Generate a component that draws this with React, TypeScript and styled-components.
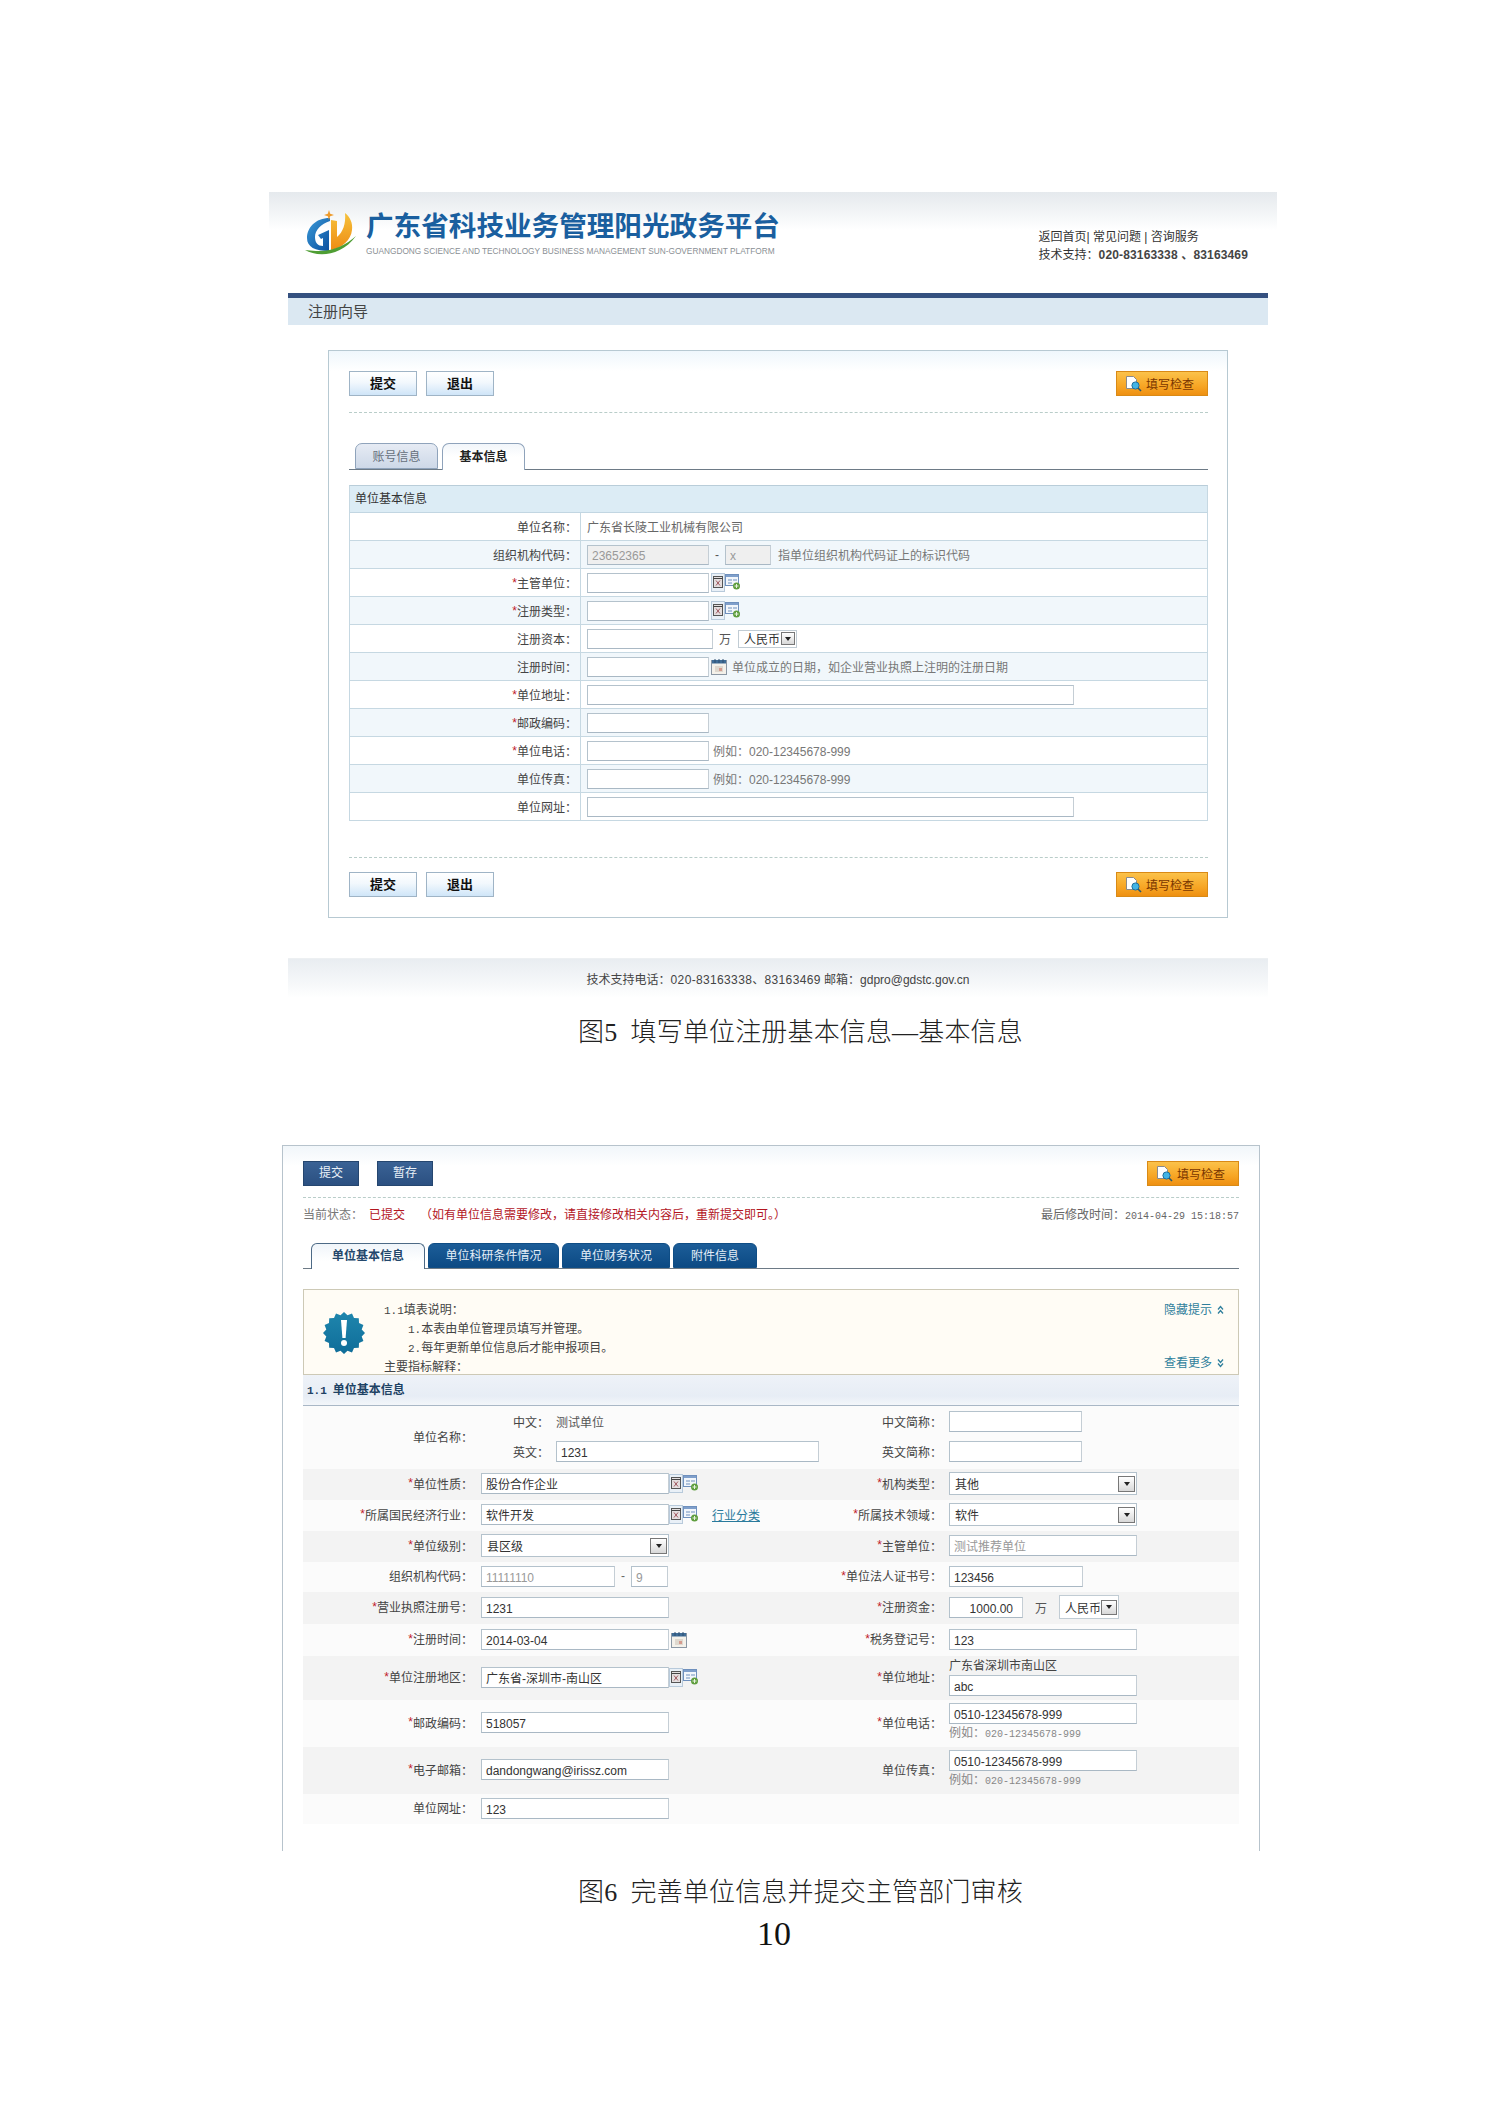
import React from 'react';
import styled, { createGlobalStyle } from 'styled-components';

const GlobalStyle = createGlobalStyle`
  html, body { margin: 0; padding: 0; background: #fff; }
  body {
    font-family: "Liberation Sans", "Noto Sans CJK SC", sans-serif;
    font-size: 12px;
    color: #333;
  }
`;

const Page = styled.div`
  width: 1489px;
  height: 2105px;
  overflow: hidden;
  padding-top: 192px;
  box-sizing: border-box;
`;

/* ---- figure 5 ---- */

const Figure5 = styled.section`
  width: 1008px;
  margin-left: 269px;
`;

const Header = styled.header`
  height: 101px;
  display: flex;
  justify-content: space-between;
  background: linear-gradient(#e5e9ed 0, #f6f8f9 26px, #fff 38px);
`;

const Brand = styled.div`
  display: flex;
  padding: 18px 0 0 36px;
`;

const BrandText = styled.div`
  margin-left: 9px;
`;

const BrandTitle = styled.div`
  font-size: 27.6px;
  line-height: 28px;
  font-weight: 700;
  color: #1a5f9f;
  white-space: nowrap;
  margin-top: 3px;
`;

const BrandSub = styled.div`
  font-size: 8.3px;
  line-height: 10px;
  margin-top: 5px;
  color: #8a8f94;
  white-space: nowrap;
`;

const HeaderLinks = styled.div`
  margin: 36px 29px 0 0;
  line-height: 18px;
  color: #333;
  white-space: nowrap;
`;

const Phone = styled.span`
  font-weight: 700;
  letter-spacing: 0.15px;
  color: #444;
`;

const NavBar = styled.div`
  margin: 0 9px 0 19px;
  height: 27px;
  line-height: 27px;
  padding-left: 20px;
  border-top: 5px solid #34507f;
  background: #dbe8f2;
  font-size: 15px;
  color: #444;
`;

const Panel = styled.div`
  box-sizing: border-box;
  width: 900px;
  height: 568px;
  margin: 25px 0 0 59px;
  padding: 20px 19px 0 20px;
  border: 1px solid #b7c9d2;
  background: linear-gradient(#eff7fc 0, #fff 20px);
`;

const Toolbar = styled.div<{ $gap: number }>`
  display: flex;
  gap: ${(p) => p.$gap}px;
  height: 25px;
`;

const Spacer = styled.div`
  flex: 1;
`;

const LightButton = styled.div`
  box-sizing: border-box;
  width: 68px;
  height: 25px;
  line-height: 24px;
  text-align: center;
  font-weight: 700;
  font-size: 13px;
  color: #111;
  border: 1px solid #9fb4c6;
  background: linear-gradient(#fff, #f2f8fd 45%, #cfe5f8);
`;

const CheckButton = styled.div`
  box-sizing: border-box;
  width: 92px;
  height: 25px;
  display: flex;
  align-items: center;
  padding-left: 8px;
  gap: 4px;
  font-size: 12px;
  color: #7a3600;
  border: 1px solid #d98a16;
  background: linear-gradient(#fbc24a, #f7a625 60%, #ee9012);
`;

const Dashed = styled.div<{ $top: number; $bottom: number }>`
  border-top: 1px dashed #b9cdc9;
  margin: ${(p) => p.$top}px 0 ${(p) => p.$bottom}px;
`;

const TabRow = styled.div<{ $indent: number; $gap: number; $h: number; $top?: number }>`
  display: flex;
  height: ${(p) => p.$h}px;
  margin-top: ${(p) => p.$top ?? 0}px;
  padding-left: ${(p) => p.$indent}px;
  gap: ${(p) => p.$gap}px;
  border-bottom: 1px solid #6d7a86;
`;

const LightTab = styled.div<{ $active?: boolean }>`
  box-sizing: border-box;
  width: 83px;
  height: ${(p) => (p.$active ? 27 : 26)}px;
  line-height: 26px;
  text-align: center;
  border: 1px solid #8fa3bb;
  border-bottom: ${(p) => (p.$active ? 'none' : '1px solid #8fa3bb')};
  border-radius: 7px 7px 0 0;
  font-weight: ${(p) => (p.$active ? 700 : 400)};
  color: ${(p) => (p.$active ? '#222' : '#66707c')};
  background: ${(p) => (p.$active ? 'linear-gradient(#f2f6fa, #fff 50%)' : 'linear-gradient(#e6ebf4, #cdd8e8)')};
`;

const InfoTable = styled.div`
  margin-top: 15px;
  border: 1px solid #c6d8e2;
  border-top-color: #b9cdd9;
`;

const TableTitle = styled.div`
  height: 26px;
  line-height: 26px;
  padding-left: 5px;
  background: #dcecf5;
  border-bottom: 1px solid #c2d6e2;
  color: #333;
`;

const InfoRow = styled.div<{ $alt?: boolean }>`
  display: grid;
  grid-template-columns: 231px 1fr;
  height: 27px;
  border-bottom: 1px solid #c6d8e2;
  background: ${(p) => (p.$alt ? '#f1f7fb' : '#fff')};
  &:last-child { border-bottom: none; }
`;

const InfoLabel = styled.div`
  display: flex;
  align-items: center;
  justify-content: flex-end;
  padding-right: 3px;
  border-right: 1px solid #c6d8e2;
  color: #444;
`;

const InfoField = styled.div`
  display: flex;
  align-items: center;
  padding-left: 6px;
  color: #666;
`;

const Star = styled.span`
  color: #c0202a;
`;

const TextBox = styled.div<{ $w: number; $h?: number; $gray?: boolean; $muted?: boolean; $right?: boolean }>`
  box-sizing: border-box;
  width: ${(p) => p.$w}px;
  height: ${(p) => p.$h ?? 20}px;
  line-height: ${(p) => (p.$h ?? 20) + 1}px;
  flex: none;
  padding: 0 ${(p) => (p.$right ? 9 : 4)}px 0 4px;
  text-align: ${(p) => (p.$right ? 'right' : 'left')};
  border: 1px solid #b4c2cc;
  border-right-color: #c5ced5;
  border-bottom-color: #a9b8c4;
  background: ${(p) => (p.$gray ? '#efefef' : '#fff')};
  color: ${(p) => (p.$gray || p.$muted ? '#999' : '#333')};
  white-space: nowrap;
`;

const Hint = styled.span<{ $left: number }>`
  margin-left: ${(p) => p.$left}px;
  color: #777;
  white-space: nowrap;
`;

const Plain = styled.span<{ $left: number; $right: number }>`
  margin: 0 ${(p) => p.$right}px 0 ${(p) => p.$left}px;
  color: #555;
`;

const MiniSelect = styled.div<{ $w: number; $h: number }>`
  box-sizing: border-box;
  width: ${(p) => p.$w}px;
  height: ${(p) => p.$h}px;
  flex: none;
  display: flex;
  align-items: center;
  justify-content: space-between;
  padding: 0 1px 0 5px;
  background: #fff;
  border: 1px solid #c1ccd4;
  color: #333;
`;

const Footer = styled.footer`
  margin: 40px 9px 0 19px;
  height: 40px;
  padding-top: 13px;
  box-sizing: border-box;
  line-height: 16px;
  text-align: center;
  color: #444;
  background: linear-gradient(#e9edf1, #f5f7f9 60%, #fff);
  border-top: 1px solid #edf0f2;
`;

const FooterPhone = styled.span`
  letter-spacing: 0.35px;
`;

const Caption = styled.div<{ $top: number; $left: number }>`
  margin: ${(p) => p.$top}px 0 0 ${(p) => p.$left}px;
  height: 36px;
  line-height: 36px;
  font-family: "Liberation Serif", "Noto Sans CJK SC", serif;
  font-size: 26px;
  font-weight: 300;
  letter-spacing: 0.15px;
  color: #222;
  white-space: nowrap;
`;

/* ---- figure 6 ---- */

const Panel6 = styled.section`
  box-sizing: border-box;
  width: 978px;
  height: 706px;
  margin: 94px 0 0 282px;
  padding: 15px 20px 0 20px;
  border: 1px solid #b7c3cc;
  border-bottom: none;
  background: linear-gradient(#f1f6fa 0, #fff 20px);
`;

const DarkButton = styled.div`
  width: 56px;
  height: 25px;
  line-height: 24px;
  text-align: center;
  color: #eaf1f8;
  background: linear-gradient(#3b6396, #2a4f80);
  box-shadow: inset 0 0 0 1px #25466f;
`;

const StatusRow = styled.div`
  display: flex;
  align-items: center;
  height: 30px;
  color: #777;
  white-space: nowrap;
`;

const Red = styled.span<{ $left: number }>`
  margin-left: ${(p) => p.$left}px;
  color: #b3161f;
`;

const Modified = styled.span`
  margin-left: auto;
  color: #666;
`;

const Mono = styled.span<{ $size?: number }>`
  font-family: "Liberation Mono", monospace;
  font-size: ${(p) => p.$size ?? 10}px;
`;

const DarkTab = styled.div<{ $w: number; $active?: boolean }>`
  box-sizing: border-box;
  width: ${(p) => p.$w}px;
  height: ${(p) => (p.$active ? 26 : 25)}px;
  line-height: 24px;
  text-align: center;
  border-radius: 6px 6px 0 0;
  border: 1px solid ${(p) => (p.$active ? '#4d6a86' : '#0f4d85')};
  border-bottom: ${(p) => (p.$active ? 'none' : '1px solid #0f4d85')};
  font-weight: ${(p) => (p.$active ? 700 : 400)};
  color: ${(p) => (p.$active ? '#24486c' : '#e4eef7')};
  background: ${(p) => (p.$active ? 'linear-gradient(#f0f5fa, #fff 70%)' : 'linear-gradient(#1c5d98, #0c4a84)')};
`;

const Notice = styled.div`
  box-sizing: border-box;
  height: 86px;
  margin-top: 20px;
  display: flex;
  border: 1px solid #cdc9b6;
  background: #fffcf5;
`;

const NoticeIcon = styled.div`
  width: 80px;
  display: flex;
  align-items: center;
  justify-content: center;
  padding-top: 1px;
`;

const NoticeText = styled.div`
  padding-top: 11px;
  line-height: 18px;
  color: #444;
`;

const NoticeLine = styled.div<{ $indent?: boolean }>`
  padding-left: ${(p) => (p.$indent ? 24 : 0)}px;
`;

const NoticeLinks = styled.div`
  margin-left: auto;
  padding: 11px 14px 2px 0;
  display: flex;
  flex-direction: column;
  justify-content: space-between;
`;

const NoticeLink = styled.div`
  display: flex;
  align-items: center;
  gap: 5px;
  line-height: 18px;
  color: #2f7f9c;
`;

const SectionHead = styled.div`
  height: 30px;
  line-height: 30px;
  padding-left: 4px;
  font-weight: 700;
  color: #1e4264;
  background: linear-gradient(#eef2f8, #e7edf5 70%, #f3f6fa);
  border-bottom: 1px solid #a9b7c6;
`;

const SectionNo = styled.span`
  font-family: "Liberation Mono", monospace;
  font-size: 11px;
  margin-right: 6px;
`;

const FormRow = styled.div<{ $h: number; $gray?: boolean }>`
  display: grid;
  grid-template-columns: 170px 298px 171px 294px;
  height: ${(p) => p.$h}px;
  background: ${(p) => (p.$gray ? '#f3f3f3' : '#fbfbfb')};
`;

const FormLabel = styled.div`
  display: flex;
  align-items: center;
  justify-content: flex-end;
  padding-bottom: 3px;
  box-sizing: border-box;
  color: #444;
  white-space: nowrap;
`;

const FormCell = styled.div<{ $pad: number }>`
  display: flex;
  align-items: center;
  padding-left: ${(p) => p.$pad}px;
  padding-bottom: 2px;
  box-sizing: border-box;
  color: #333;
`;

const StackCell = styled.div<{ $pad: number; $gap?: number }>`
  display: flex;
  flex-direction: column;
  justify-content: center;
  gap: ${(p) => p.$gap ?? 0}px;
  padding-left: ${(p) => p.$pad}px;
  padding-bottom: 2px;
  box-sizing: border-box;
`;

const NameLines = styled.div`
  display: grid;
  grid-template-columns: 76px 1fr;
  grid-auto-rows: 30px;
  align-items: center;
  color: #444;
`;

const ShortKeys = styled.div`
  display: grid;
  grid-auto-rows: 30px;
  align-items: center;
  justify-items: end;
  color: #444;
`;

const NameKey = styled.div`
  text-align: right;
`;

const NameValue = styled.div`
  padding-left: 7px;
  color: #555;
`;

const AddressText = styled.div`
  line-height: 17px;
  color: #444;
`;

const SubHint = styled.div`
  margin-top: 2px;
  line-height: 14px;
  color: #888;
`;

const SelectBox = styled.div<{ $w: number }>`
  box-sizing: border-box;
  width: ${(p) => p.$w}px;
  height: 23px;
  display: flex;
  align-items: center;
  justify-content: space-between;
  padding: 0 1px 0 5px;
  flex: none;
  background: #fff;
  border: 1px solid #b4c2cc;
  color: #333;
`;

const DropButton = styled.div<{ $size: number }>`
  box-sizing: border-box;
  width: ${(p) => p.$size}px;
  height: ${(p) => p.$size - 1}px;
  display: flex;
  align-items: center;
  justify-content: center;
  border: 1px solid #777;
  background: linear-gradient(#fff, #d8d8d8);
`;

const TriDown = styled.div`
  width: 0;
  height: 0;
  border: 3px solid transparent;
  border-top: 4px solid #222;
  border-bottom: none;
`;

const IconGroup = styled.div<{ $left?: number }>`
  display: flex;
  align-items: center;
  margin-left: ${(p) => p.$left ?? 2}px;
`;

const LinkText = styled.a`
  margin-left: 13px;
  color: #2a7a9c;
  text-decoration: underline;
`;

const CodeDash = styled.span`
  margin: 0 6px;
  color: #666;
`;

const PageNo = styled.div`
  margin: 3px 0 0 757px;
  height: 40px;
  line-height: 40px;
  font-family: "Liberation Serif", serif;
  font-size: 34px;
  color: #111;
`;

/* ---- drawings ---- */

const Logo = () => (
  <svg width="52" height="46" viewBox="0 0 52 46">
    <defs>
      <linearGradient id="logoBlue" x1="0" y1="0" x2="1" y2="1">
        <stop offset="0" stopColor="#3a9ad8" />
        <stop offset="1" stopColor="#0b4f9e" />
      </linearGradient>
      <linearGradient id="logoOrange" x1="0" y1="0" x2="0" y2="1">
        <stop offset="0" stopColor="#f6c23c" />
        <stop offset="1" stopColor="#ee8c14" />
      </linearGradient>
    </defs>
    <path d="M25 8C10 8 2 18 2 28c0 9 8 13 22 13V20l-11 5 3 4 2-1v8c-5 0-8-3-8-9 0-7 6-13 15-16z" fill="url(#logoBlue)" />
    <path d="M26 10l6 1v16c6-5 9-13 8-24 5 4 8 10 7 17-1 10-10 18-21 20z" fill="url(#logoOrange)" />
    <path d="M0 40c12 7 36 7 51-14-10 9-24 16-40 15-4 0-8-1-11-1z" fill="#4f9e34" />
    <path d="M24 0l1.2 3.8L29 5l-3.8 1.2L24 10l-1.2-3.8L19 5l3.8-1.2z" fill="#ee9a2a" />
  </svg>
);

const PickIcon = () => (
  <svg width="14" height="19" viewBox="0 0 14 19">
    <rect x="0.5" y="0.5" width="13" height="18" fill="#e9f0f7" stroke="#b8cadb" />
    <rect x="2.5" y="3.5" width="9" height="11" fill="#e4dfe0" stroke="#555" />
    <path d="M2.5 5.5h9" stroke="#444" />
    <path d="M5 7.5l4 5M9 7.5l-4 5" stroke="#a0575f" />
  </svg>
);

const AddIcon = () => (
  <svg width="16" height="17" viewBox="0 0 16 17">
    <rect x="0.5" y="0.5" width="13" height="11" fill="#f2f6fb" stroke="#6f90bd" />
    <path d="M1 1h12v2H1z" fill="#7f9fcb" />
    <path d="M3 6h4M3 9h4M8 6h4" stroke="#6f90bd" />
    <circle cx="11.5" cy="12" r="3.5" fill="#5f9e3f" />
    <path d="M9.5 12h4M11.5 10v4" stroke="#e8f3e0" />
  </svg>
);

const CalendarIcon = () => (
  <svg width="16" height="17" viewBox="0 0 16 17">
    <rect x="0.5" y="2.5" width="15" height="14" fill="#f4f1ea" stroke="#8b97a4" />
    <rect x="1" y="2" width="14" height="3.5" fill="#3f6c96" />
    <path d="M4 1v4M8 1v4M12 1v4" stroke="#2f4f70" />
    <path d="M4 9h8M4 11h8M4 13h8" stroke="#c9bfb3" />
    <rect x="8" y="10" width="3" height="3" fill="#d59b8e" />
  </svg>
);

const CheckIcon = () => (
  <svg width="17" height="17" viewBox="0 0 17 17">
    <path d="M1.5 1.5h7l3 3v9h-10z" fill="#fff" stroke="#8a8a8a" />
    <circle cx="10.5" cy="10.5" r="3.6" fill="#42b4e6" stroke="#1f6f9c" />
    <path d="M13 13l3 3" stroke="#27586f" strokeWidth="1.6" />
  </svg>
);

const burstPoints = Array.from({ length: 32 }, (_, i) => {
  const r = i % 2 === 0 ? 21 : 18;
  const a = (i * Math.PI) / 16;
  return `${(21 + r * Math.sin(a)).toFixed(1)},${(21 - r * Math.cos(a)).toFixed(1)}`;
}).join(' ');

const AlertBurst = () => (
  <svg width="42" height="42" viewBox="0 0 42 42">
    <defs>
      <linearGradient id="burstFill" x1="0" y1="0" x2="0" y2="1">
        <stop offset="0" stopColor="#1f86ad" />
        <stop offset="1" stopColor="#0f6d99" />
      </linearGradient>
    </defs>
    <polygon points={burstPoints} fill="url(#burstFill)" />
    <path d="M18 8h6l-1.4 18h-3.2z" fill="#fff" />
    <circle cx="21" cy="31" r="3" fill="#fff" />
  </svg>
);

const Chevrons = ({ up }: { up?: boolean }) => (
  <svg width="7" height="10" viewBox="0 0 7 10">
    <path
      d={up ? 'M1 4.5l2.5-3 2.5 3M1 8.5l2.5-3 2.5 3' : 'M1 1.5l2.5 3 2.5-3M1 5.5l2.5 3 2.5-3'}
      fill="none"
      stroke="#2f7f9c"
      strokeWidth="1.3"
    />
  </svg>
);

const PickAdd = ({ left }: { left?: number }) => (
  <IconGroup $left={left}>
    <PickIcon />
    <AddIcon />
  </IconGroup>
);

const Label = ({ text, req }: { text: string; req?: boolean }) => (
  <>
    {req && <Star>*</Star>}
    {text}：
  </>
);

const CheckAction = () => (
  <CheckButton>
    <CheckIcon />
    填写检查
  </CheckButton>
);

const Figure5Actions = () => (
  <Toolbar $gap={9}>
    <LightButton>提交</LightButton>
    <LightButton>退出</LightButton>
    <Spacer />
    <CheckAction />
  </Toolbar>
);

const App = () => {
  return (
    <Page>
      <GlobalStyle />
      <Figure5>
        <Header>
          <Brand>
            <Logo />
            <BrandText>
              <BrandTitle>广东省科技业务管理阳光政务平台</BrandTitle>
              <BrandSub>GUANGDONG SCIENCE AND TECHNOLOGY BUSINESS MANAGEMENT SUN-GOVERNMENT PLATFORM</BrandSub>
            </BrandText>
          </Brand>
          <HeaderLinks>
            <div>返回首页| 常见问题 | 咨询服务</div>
            <div>
              技术支持：<Phone>020-83163338 、83163469</Phone>
            </div>
          </HeaderLinks>
        </Header>
        <NavBar>注册向导</NavBar>
        <Panel>
          <Figure5Actions />
          <Dashed $top={16} $bottom={30} />
          <TabRow $indent={6} $gap={4} $h={26}>
            <LightTab>账号信息</LightTab>
            <LightTab $active>基本信息</LightTab>
          </TabRow>
          <InfoTable>
            <TableTitle>单位基本信息</TableTitle>
            <InfoRow>
              <InfoLabel><Label text="单位名称" /></InfoLabel>
              <InfoField>广东省长陵工业机械有限公司</InfoField>
            </InfoRow>
            <InfoRow $alt>
              <InfoLabel><Label text="组织机构代码" /></InfoLabel>
              <InfoField>
                <TextBox $w={122} $gray>23652365</TextBox>
                <Plain $left={6} $right={6}>-</Plain>
                <TextBox $w={46} $gray>x</TextBox>
                <Hint $left={7}>指单位组织机构代码证上的标识代码</Hint>
              </InfoField>
            </InfoRow>
            <InfoRow>
              <InfoLabel><Label text="主管单位" req /></InfoLabel>
              <InfoField><TextBox $w={122} /><PickAdd /></InfoField>
            </InfoRow>
            <InfoRow $alt>
              <InfoLabel><Label text="注册类型" req /></InfoLabel>
              <InfoField><TextBox $w={122} /><PickAdd /></InfoField>
            </InfoRow>
            <InfoRow>
              <InfoLabel><Label text="注册资本" /></InfoLabel>
              <InfoField>
                <TextBox $w={126} />
                <Plain $left={6} $right={7}>万</Plain>
                <MiniSelect $w={59} $h={18}>人民币<DropButton $size={14}><TriDown /></DropButton></MiniSelect>
              </InfoField>
            </InfoRow>
            <InfoRow $alt>
              <InfoLabel><Label text="注册时间" /></InfoLabel>
              <InfoField>
                <TextBox $w={122} />
                <IconGroup><CalendarIcon /></IconGroup>
                <Hint $left={5}>单位成立的日期，如企业营业执照上注明的注册日期</Hint>
              </InfoField>
            </InfoRow>
            <InfoRow>
              <InfoLabel><Label text="单位地址" req /></InfoLabel>
              <InfoField><TextBox $w={487} /></InfoField>
            </InfoRow>
            <InfoRow $alt>
              <InfoLabel><Label text="邮政编码" req /></InfoLabel>
              <InfoField><TextBox $w={122} /></InfoField>
            </InfoRow>
            <InfoRow>
              <InfoLabel><Label text="单位电话" req /></InfoLabel>
              <InfoField><TextBox $w={122} /><Hint $left={4}>例如：020-12345678-999</Hint></InfoField>
            </InfoRow>
            <InfoRow $alt>
              <InfoLabel><Label text="单位传真" /></InfoLabel>
              <InfoField><TextBox $w={122} /><Hint $left={4}>例如：020-12345678-999</Hint></InfoField>
            </InfoRow>
            <InfoRow>
              <InfoLabel><Label text="单位网址" /></InfoLabel>
              <InfoField><TextBox $w={487} /></InfoField>
            </InfoRow>
          </InfoTable>
          <Dashed $top={36} $bottom={14} />
          <Figure5Actions />
        </Panel>
        <Footer>
          技术支持电话：<FooterPhone>020-83163338、83163469</FooterPhone> 邮箱：gdpro@gdstc.gov.cn
        </Footer>
      </Figure5>
      <Caption $top={17} $left={578}>图5&nbsp; 填写单位注册基本信息—基本信息</Caption>

      <Panel6>
        <Toolbar $gap={18}>
          <DarkButton>提交</DarkButton>
          <DarkButton>暂存</DarkButton>
          <Spacer />
          <CheckAction />
        </Toolbar>
        <Dashed $top={11} $bottom={0} />
        <StatusRow>
          当前状态：
          <Red $left={6}>已提交</Red>
          <Red $left={15}>（如有单位信息需要修改，请直接修改相关内容后，重新提交即可。）</Red>
          <Modified>最后修改时间：<Mono>2014-04-29 15:18:57</Mono></Modified>
        </StatusRow>
        <TabRow $indent={8} $gap={3} $h={25} $top={15}>
          <DarkTab $w={114} $active>单位基本信息</DarkTab>
          <DarkTab $w={131}>单位科研条件情况</DarkTab>
          <DarkTab $w={108}>单位财务状况</DarkTab>
          <DarkTab $w={84}>附件信息</DarkTab>
        </TabRow>
        <Notice>
          <NoticeIcon><AlertBurst /></NoticeIcon>
          <NoticeText>
            <NoticeLine><Mono $size={11}>1.1</Mono>填表说明：</NoticeLine>
            <NoticeLine $indent><Mono $size={11}>1.</Mono>本表由单位管理员填写并管理。</NoticeLine>
            <NoticeLine $indent><Mono $size={11}>2.</Mono>每年更新单位信息后才能申报项目。</NoticeLine>
            <NoticeLine>主要指标解释：</NoticeLine>
          </NoticeText>
          <NoticeLinks>
            <NoticeLink>隐藏提示 <Chevrons up /></NoticeLink>
            <NoticeLink>查看更多 <Chevrons /></NoticeLink>
          </NoticeLinks>
        </Notice>
        <SectionHead><SectionNo>1.1</SectionNo>单位基本信息</SectionHead>

        <FormRow $h={63}>
          <FormLabel><Label text="单位名称" /></FormLabel>
          <NameLines>
            <NameKey>中文：</NameKey>
            <NameValue>测试单位</NameValue>
            <NameKey>英文：</NameKey>
            <NameValue><TextBox $w={263} $h={21}>1231</TextBox></NameValue>
          </NameLines>
          <ShortKeys>
            <div>中文简称：</div>
            <div>英文简称：</div>
          </ShortKeys>
          <StackCell $pad={7} $gap={9}>
            <TextBox $w={133} $h={21} />
            <TextBox $w={133} $h={21} />
          </StackCell>
        </FormRow>

        <FormRow $h={31} $gray>
          <FormLabel><Label text="单位性质" req /></FormLabel>
          <FormCell $pad={8}><TextBox $w={188} $h={21}>股份合作企业</TextBox><PickAdd left={0} /></FormCell>
          <FormLabel><Label text="机构类型" req /></FormLabel>
          <FormCell $pad={7}><SelectBox $w={188}>其他<DropButton $size={17}><TriDown /></DropButton></SelectBox></FormCell>
        </FormRow>
        <FormRow $h={31}>
          <FormLabel><Label text="所属国民经济行业" req /></FormLabel>
          <FormCell $pad={8}>
            <TextBox $w={188} $h={21}>软件开发</TextBox><PickAdd left={0} />
            <LinkText>行业分类</LinkText>
          </FormCell>
          <FormLabel><Label text="所属技术领域" req /></FormLabel>
          <FormCell $pad={7}><SelectBox $w={188}>软件<DropButton $size={17}><TriDown /></DropButton></SelectBox></FormCell>
        </FormRow>
        <FormRow $h={31} $gray>
          <FormLabel><Label text="单位级别" req /></FormLabel>
          <FormCell $pad={8}><SelectBox $w={188}>县区级<DropButton $size={17}><TriDown /></DropButton></SelectBox></FormCell>
          <FormLabel><Label text="主管单位" req /></FormLabel>
          <FormCell $pad={7}><TextBox $w={188} $h={21} $muted>测试推荐单位</TextBox></FormCell>
        </FormRow>
        <FormRow $h={30}>
          <FormLabel><Label text="组织机构代码" /></FormLabel>
          <FormCell $pad={8}>
            <TextBox $w={134} $h={21} $muted>11111110</TextBox>
            <CodeDash>-</CodeDash>
            <TextBox $w={37} $h={21} $muted>9</TextBox>
          </FormCell>
          <FormLabel><Label text="单位法人证书号" req /></FormLabel>
          <FormCell $pad={7}><TextBox $w={134} $h={21}>123456</TextBox></FormCell>
        </FormRow>
        <FormRow $h={32} $gray>
          <FormLabel><Label text="营业执照注册号" req /></FormLabel>
          <FormCell $pad={8}><TextBox $w={188} $h={21}>1231</TextBox></FormCell>
          <FormLabel><Label text="注册资金" req /></FormLabel>
          <FormCell $pad={7}>
            <TextBox $w={74} $h={21} $right>1000.00</TextBox>
            <Plain $left={12} $right={12}>万</Plain>
            <MiniSelect $w={60} $h={24}>人民币<DropButton $size={16}><TriDown /></DropButton></MiniSelect>
          </FormCell>
        </FormRow>
        <FormRow $h={32}>
          <FormLabel><Label text="注册时间" req /></FormLabel>
          <FormCell $pad={8}><TextBox $w={188} $h={21}>2014-03-04</TextBox><IconGroup><CalendarIcon /></IconGroup></FormCell>
          <FormLabel><Label text="税务登记号" req /></FormLabel>
          <FormCell $pad={7}><TextBox $w={188} $h={21}>123</TextBox></FormCell>
        </FormRow>
        <FormRow $h={44} $gray>
          <FormLabel><Label text="单位注册地区" req /></FormLabel>
          <FormCell $pad={8}><TextBox $w={188} $h={21}>广东省-深圳市-南山区</TextBox><PickAdd left={0} /></FormCell>
          <FormLabel><Label text="单位地址" req /></FormLabel>
          <StackCell $pad={7}>
            <AddressText>广东省深圳市南山区</AddressText>
            <TextBox $w={188} $h={21}>abc</TextBox>
          </StackCell>
        </FormRow>
        <FormRow $h={47}>
          <FormLabel><Label text="邮政编码" req /></FormLabel>
          <FormCell $pad={8}><TextBox $w={188} $h={21}>518057</TextBox></FormCell>
          <FormLabel><Label text="单位电话" req /></FormLabel>
          <StackCell $pad={7}>
            <TextBox $w={188} $h={21}>0510-12345678-999</TextBox>
            <SubHint>例如：<Mono>020-12345678-999</Mono></SubHint>
          </StackCell>
        </FormRow>
        <FormRow $h={47} $gray>
          <FormLabel><Label text="电子邮箱" req /></FormLabel>
          <FormCell $pad={8}><TextBox $w={188} $h={21}>dandongwang@irissz.com</TextBox></FormCell>
          <FormLabel><Label text="单位传真" /></FormLabel>
          <StackCell $pad={7}>
            <TextBox $w={188} $h={21}>0510-12345678-999</TextBox>
            <SubHint>例如：<Mono>020-12345678-999</Mono></SubHint>
          </StackCell>
        </FormRow>
        <FormRow $h={30}>
          <FormLabel><Label text="单位网址" /></FormLabel>
          <FormCell $pad={8}><TextBox $w={188} $h={21}>123</TextBox></FormCell>
          <div />
          <div />
        </FormRow>
      </Panel6>
      <Caption $top={24} $left={578}>图6&nbsp; 完善单位信息并提交主管部门审核</Caption>
      <PageNo>10</PageNo>
    </Page>
  );
};

export default App;
